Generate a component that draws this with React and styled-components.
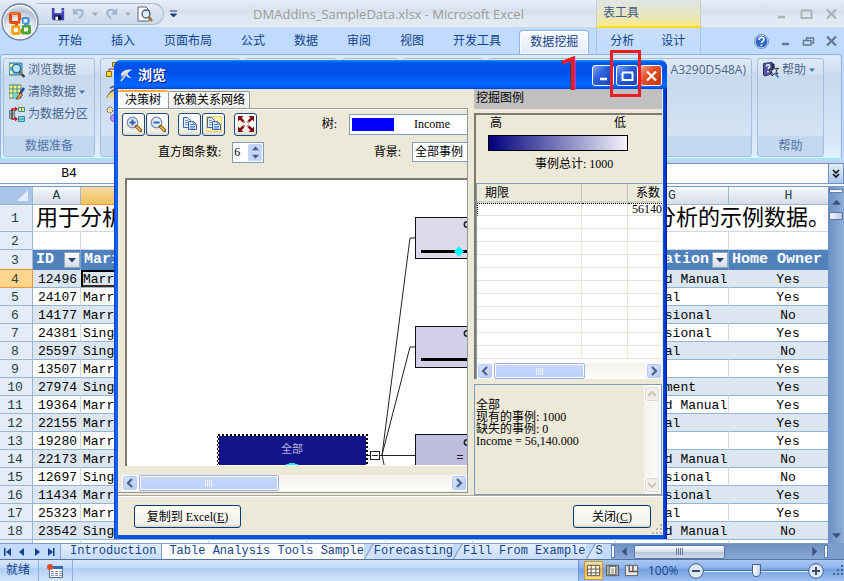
import React from 'react';
import styled, { createGlobalStyle, css } from 'styled-components';

const rows = [
  ['12496', 'Married', 'Skilled Manual', 'Yes'],
  ['24107', 'Married', 'Clerical', 'Yes'],
  ['14177', 'Married', 'Professional', 'No'],
  ['24381', 'Single', 'Professional', 'Yes'],
  ['25597', 'Single', 'Clerical', 'No'],
  ['13507', 'Married', '', 'Yes'],
  ['27974', 'Single', 'Management', 'Yes'],
  ['19364', 'Married', 'Skilled Manual', 'Yes'],
  ['22155', 'Married', 'Clerical', 'Yes'],
  ['19280', 'Married', '', 'Yes'],
  ['22173', 'Married', 'Skilled Manual', 'No'],
  ['12697', 'Single', 'Professional', 'No'],
  ['11434', 'Married', 'Professional', 'Yes'],
  ['25323', 'Married', 'Clerical', 'Yes'],
  ['23542', 'Single', 'Skilled Manual', 'No'],
];

const ribbonTabs = ['开始', '插入', '页面布局', '公式', '数据', '审阅', '视图', '开发工具', '数据挖掘'];

function Arrow({ dir = 'down', size = 7, color = '#4d6185' }) {
  const turn = { down: 0, up: 180, left: 90, right: 270 }[dir];
  return (
    <svg width={size} height={size} viewBox="0 0 8 8" aria-hidden="true">
      <path d="M0 2h8L4 6.5z" fill={color} transform={`rotate(${turn} 4 4)`} />
    </svg>
  );
}

function Chevron({ dir, color = '#4d6185' }) {
  const turn = { right: 0, down: 90, left: 180, up: 270 }[dir];
  return (
    <svg width="10" height="10" viewBox="0 0 10 10" aria-hidden="true">
      <path d="M3 1l4 4-4 4" fill="none" stroke={color} strokeWidth="2.2" transform={`rotate(${turn} 5 5)`} />
    </svg>
  );
}

function WindowGlyph({ kind, color }) {
  return (
    <svg width="13" height="12" viewBox="0 0 13 12" fill="none" stroke={color} aria-hidden="true">
      {kind === 'min' && <path d="M3 9h7" strokeWidth="2.500" />}
      {kind === 'max' && <path d="M1 2.500h11M1.500 3v7h10V3" strokeWidth="2" />}
      {kind === 'restore' && <path d="M4 3h8M4.500 3v2M11.500 3v5H10M1 5.500h8M1.500 5v5h7.500V5" strokeWidth="1.400" />}
      {kind === 'close' && <path d="M2 1.500l9 9M11 1.500l-9 9" strokeWidth="2.200" />}
    </svg>
  );
}

function OfficeLogo() {
  return (
    <svg width="40" height="42" viewBox="0 0 40 42" aria-hidden="true">
      <defs>
        <radialGradient id="orb" cx="50%" cy="75%" r="75%">
          <stop offset="0" stopColor="#ffffff" />
          <stop offset="0.5" stopColor="#e4e9f2" />
          <stop offset="0.75" stopColor="#b4bfd2" />
          <stop offset="1" stopColor="#f4f6fa" />
        </radialGradient>
      </defs>
      <circle cx="20" cy="22" r="18" fill="url(#orb)" stroke="#72839f" strokeWidth="1.300" />
      <circle cx="20" cy="22" r="16.500" fill="none" stroke="#fff" opacity="0.800" />
      <g fill="none">
        <rect x="10.500" y="13.500" width="9" height="9" rx="1.500" stroke="#e8490f" strokeWidth="3.200" />
        <path d="M11 13.500h7" stroke="#f28a1c" strokeWidth="2" />
        <rect x="22.500" y="18" width="6" height="5.500" rx="1" stroke="#3b8fd6" strokeWidth="2.200" />
        <rect x="12.500" y="26.500" width="7" height="7" rx="1" stroke="#f4a61c" strokeWidth="2.800" />
        <rect x="22.500" y="26" width="7" height="7" rx="1" stroke="#4fa532" strokeWidth="3" />
        <path d="M17 24.500h8M21 20v9" stroke="#f7f8fb" strokeWidth="1.500" />
        <path d="M15 24.500h3" stroke="#e8490f" strokeWidth="2" />
        <path d="M24 24.500h3" stroke="#3b8fd6" strokeWidth="2" />
      </g>
    </svg>
  );
}

function Icon({ name, size = 16 }) {
  return (
    <svg width={size} height={size} viewBox="0 0 16 16" fill="none" aria-hidden="true">
      {name === 'save' && (
        <>
          <path d="M1 1h14v14H2.500L1 13.500z" fill="#3f43b5" />
          <path d="M4 1h8v6H4z" fill="#dfe8fa" />
          <path d="M4 9.500h8V15H4z" fill="#15183c" />
          <path d="M5 11h3v4H5z" fill="#eef2ff" />
          <path d="M13 3h1v2h-1z" fill="#c6ccff" />
        </>
      )}
      {(name === 'undo' || name === 'redo') && (
        <g transform={name === 'redo' ? 'translate(16 0) scale(-1 1)' : undefined}>
          <path d="M4 7c2-4 8-4 8.500 0 .3 3-2 4-4 6" stroke="#9fb2d3" strokeWidth="2.200" />
          <path d="M2 2v7h7z" fill="#9fb2d3" />
        </g>
      )}
      {name === 'preview' && (
        <>
          <path d="M1 1h8l3 3v11H1z" fill="#fff" stroke="#58627a" />
          <circle cx="9" cy="8" r="4" fill="#d9ecfa" stroke="#4a5872" strokeWidth="1.300" />
          <path d="M12 11l3 4" stroke="#a86a20" strokeWidth="2.200" />
        </>
      )}
      {name === 'explore' && (
        <>
          <path d="M0 1h13v12H0z" fill="#5cbfe0" stroke="#3f7f9b" />
          <path d="M1 2h3v3H1zM1 9h3v3H1z" fill="#fff78f" />
          <circle cx="7.500" cy="6.500" r="4.200" fill="#b9e6fa" stroke="#39729b" strokeWidth="1.500" />
          <path d="M10.500 10l5 5" stroke="#333b4a" strokeWidth="2.400" />
          <path d="M11 10.500l2 2" stroke="#d88f24" strokeWidth="1.500" />
        </>
      )}
      {name === 'clean' && (
        <>
          <path d="M0 1h12v13H0z" fill="#fff37a" stroke="#3c8795" />
          <path d="M0 5h12M0 9h12M4 1v13M8 1v13" stroke="#3c8795" />
          <path d="M4 9h4v5H4z" fill="#6fd0e0" />
          <path d="M15 4l-4 6" stroke="#27408b" strokeWidth="2.500" />
          <path d="M11.500 9l2 2-4 4H7z" fill="#e8a046" stroke="#55361a" strokeWidth="0.800" />
        </>
      )}
      {name === 'partition' && (
        <>
          <path d="M0.500 4.500h5v8h-5z" fill="#7cdce8" stroke="#3c8795" />
          <path d="M9.500 1.500h6v4h-6z" fill="#fff37a" stroke="#3c8795" />
          <path d="M9.500 10.500h6v5h-6z" fill="#7cdce8" stroke="#3c8795" />
          <path d="M12.500 1.500v4M9.500 13h6M0.500 8h5" stroke="#3c8795" />
          <path d="M3 9V3h4M3 8v5h4" stroke="#c01818" strokeWidth="1.600" />
          <path d="M6 0.500L9 3 6 5.500zM6 10.500L9 13l-3 2.500z" fill="#c01818" />
        </>
      )}
      {name === 'tree' && (
        <>
          <path d="M3 12V7h6V3" stroke="#a02020" />
          <path d="M6.500 0.500h5v4h-5zM0.500 9.500h5v5h-5z" fill="#ffd83a" stroke="#8d6b00" />
        </>
      )}
      {name === 'curve' && (
        <>
          <path d="M4 4l7-3M1 14c3-6 6-9 10-9" stroke="#47566f" strokeWidth="1.500" />
          <path d="M1 14c2-5 5-7 10-7v7z" fill="#f8d67c" />
        </>
      )}
      {name === 'cluster' && (
        <>
          <circle cx="4" cy="4" r="3" fill="#e9e0a8" stroke="#55556b" strokeDasharray="2 1" />
          <circle cx="8" cy="12" r="3.500" fill="#b99aef" stroke="#7956bd" />
        </>
      )}
      {name === 'helpbook' && (
        <>
          <path d="M0.500 1.500L9 0.500v11L2 14l-1.500-1z" fill="#55579f" stroke="#2c2c5c" />
          <path d="M9 1l2.500 1v7L9 12z" fill="#262650" />
          <path d="M3.500 4.500c0-2.500 3.500-2.500 3 0L5 7M5 9v1.500" stroke="#fff" strokeWidth="1.400" />
          <path d="M10.500 4l1.500 3 3.500-1-2.500 3 2 3-3-1-3 3v-4L6 8h4z" fill="#d9e3ee" stroke="#252a36" />
          <path d="M11.500 11l4 4.500" stroke="#3f79c8" strokeWidth="1.800" />
        </>
      )}
      {name === 'pick' && (
        <>
          <path d="M2 6c3-4 7-5 12-4-2 1-4 2-5 4 1 2 3 4 5 5-3 0-6-1-7-4-2 1-3 1-4 3z" fill="#dfe4ea" />
          <path d="M9 5l-7 9" stroke="#c3cad2" strokeWidth="2" />
        </>
      )}
      {(name === 'zoomin' || name === 'zoomout') && (
        <>
          <circle cx="6.500" cy="6.500" r="5.300" fill="#dfeaf8" stroke="#7d90ab" strokeWidth="1.200" />
          <path d="M10.500 10.500l4 4" stroke="#7d5c1c" strokeWidth="3.500" strokeLinecap="round" />
          <path d="M10.500 10.500l4 4" stroke="#f2c54b" strokeWidth="1.700" />
          <path d={name === 'zoomin' ? 'M3.500 6.500h6M6.500 3.500v6' : 'M3.500 6.500h6'} stroke="#3a61a5" strokeWidth="2" />
        </>
      )}
      {(name === 'copy' || name === 'copyall') && (
        <>
          {name === 'copyall' && <rect x="0.500" y="0.500" width="15" height="15" fill="#fff2b0" stroke="#edc33c" strokeDasharray="2 1" />}
          <path d="M1.500 1.500h4l3 3v7h-7z" fill="#e7f1ff" stroke="#3864b1" />
          <path d="M3 4.500h3M3 6.500h3M3 8.500h3" stroke="#6c94d5" />
          <path d="M6.500 5.500h5l3 3v5h-8z" fill="#d3e4ff" stroke="#3864b1" />
          <path d="M8 8.500h3M8 10.500h5M8 12h5M11.500 6v2.500h3" stroke="#5c84c9" />
        </>
      )}
      {name === 'fit' && (
        <>
          <path d="M2 2l4.500 4.500M14 2L9.500 6.500M2 14l4.500-4.500M14 14L9.500 9.500" stroke="#850d12" strokeWidth="2.500" strokeDasharray="5 0.700" />
          <path d="M0 0h5.500L0 5.500zM16 0v5.500L10.500 0zM0 16v-5.500L5.500 16zM16 16h-5.500l5.500-5.500z" fill="#850d12" />
        </>
      )}
      {name === 'macro' && (
        <>
          <path d="M2.500 3.500h13v11h-13z" fill="#fff" stroke="#536d99" />
          <path d="M2 3h14v3H2z" fill="#3869b4" />
          <path d="M4 8.500h3M8 8.500h3M12 8.500h3M4 10.500h3M8 10.500h3M12 10.500h3M4 12.500h3M8 12.500h3M12 12.500h3" stroke="#8298bd" />
          <circle cx="3" cy="4" r="3" fill="#d94f2e" />
        </>
      )}
      {name === 'normal' && (
        <>
          <path d="M1.500 2.500h13v11h-13z" fill="#fffbe8" stroke="#58554c" />
          <path d="M1.500 6.500h13M1.500 10.500h13M5.500 2.500v11M10.500 2.500v11" stroke="#58554c" />
        </>
      )}
      {name === 'page' && (
        <>
          <path d="M1.500 2.500h13v11h-13z" fill="#b2b2b8" stroke="#58554c" />
          <path d="M4.500 3.500h7v9h-7z" fill="#fff" stroke="#58554c" />
          <path d="M6 6.500h4M6 8.500h4M6 10.500h4" stroke="#777" />
        </>
      )}
      {name === 'breaks' && (
        <>
          <path d="M1.500 2.500h13v11h-13z" fill="#e8e8ef" stroke="#58554c" />
          <path d="M5.500 3v6h4V3M9.500 9H15" stroke="#58554c" strokeWidth="1.500" />
        </>
      )}
    </svg>
  );
}

function Grip({ color = '#b8b4a2' }) {
  return (
    <svg width="11" height="11" viewBox="0 0 11 11" fill={color} aria-hidden="true">
      <path d="M8 0h2v2H8zM4 4h2v2H4zM8 4h2v2H8zM0 8h2v2H0zM4 8h2v2H4zM8 8h2v2H8z" />
    </svg>
  );
}

function XpScroll({ thumb }) {
  return (
    <ScrollTrack>
      <ScrollButton aria-label="向左"><Chevron dir="left" /></ScrollButton>
      <ScrollThumb $width={thumb}>
        <svg width="8" height="7" aria-hidden="true">
          <path d="M0.500 0v7M2.500 0v7M4.500 0v7M6.500 0v7" stroke="#8cabf0" />
        </svg>
      </ScrollThumb>
      <ScrollSpace />
      <ScrollButton aria-label="向右"><Chevron dir="right" /></ScrollButton>
    </ScrollTrack>
  );
}

function TreeDiagram() {
  return (
    <Canvas>
      <svg width="600" height="285" viewBox="127 180 600 285" role="img" aria-label="决策树">
        <defs>
          <pattern id="hatch" width="4" height="4" patternUnits="userSpaceOnUse">
            <rect width="4" height="4" fill="#fff" />
            <path d="M0 0h2v2H0zM2 2h2v2H2z" fill="#000" />
          </pattern>
        </defs>
        <g fill="none" stroke="#222">
          <path d="M415 238h-5l-28 217M415 347h-5l-28 108M368 455.500h47M382 455l3 14" />
        </g>
        <g stroke="#111">
          <rect x="415.500" y="217.500" width="150" height="41" fill="#dcdaea" />
          <rect x="415.500" y="326.500" width="150" height="41" fill="#d2d0e8" />
          <rect x="415.500" y="434.500" width="150" height="41" fill="#bebddf" />
        </g>
        <path d="M421 251.500h100M421 359.500h100" stroke="#000" strokeWidth="3" />
        <path d="M459 246.500l5 5-5 5-5-5z" fill="#0ff" />
        <g fill="none" stroke="#222" strokeWidth="1.500">
          <circle cx="467" cy="224.500" r="2.700" />
          <circle cx="467" cy="333.500" r="2.700" />
          <circle cx="467" cy="442.500" r="2.700" />
          <path d="M457 455.500h6M457 458.500h6" strokeWidth="1" />
        </g>
        <rect x="217" y="434" width="151" height="45" fill="url(#hatch)" />
        <rect x="219" y="436" width="147" height="45" fill="#14148a" />
        <NodeLabel x="292" y="453">全部</NodeLabel>
        <path d="M286 464h3v-1h6v1h3v2h-12z" fill="#0ff" />
        <rect x="370.500" y="451.500" width="9" height="8" fill="#fff" stroke="#222" />
        <path d="M372 455.500h6" stroke="#222" />
      </svg>
    </Canvas>
  );
}

function BrowseDialog() {
  return (
    <Dialog role="dialog" aria-labelledby="browse-title">
      <DialogTitle>
        <Icon name="pick" size={15} />
        <h2 id="browse-title">浏览</h2>
        <XpButton aria-label="最小化"><WindowGlyph kind="min" color="#fff" /></XpButton>
        <XpButton aria-label="最大化"><WindowGlyph kind="max" color="#fff" /></XpButton>
        <XpButton $close aria-label="关闭窗口"><WindowGlyph kind="close" color="#fff" /></XpButton>
      </DialogTitle>
      <DialogBody>
        <Panes>
          <LeftPane>
            <TabStrip role="tablist">
              <PaneTab role="tab" aria-selected="true" $active>决策树</PaneTab>
              <PaneTab role="tab" aria-selected="false">依赖关系网络</PaneTab>
            </TabStrip>
            <TabPanel role="tabpanel">
              <ToolRow>
                <ToolButton aria-label="放大"><Icon name="zoomin" /></ToolButton>
                <ToolButton aria-label="缩小"><Icon name="zoomout" /></ToolButton>
                <ToolGap />
                <ToolButton aria-label="复制视图"><Icon name="copy" /></ToolButton>
                <ToolButton aria-label="复制全部"><Icon name="copyall" /></ToolButton>
                <ToolGap />
                <ToolButton aria-label="适合大小"><Icon name="fit" /></ToolButton>
                <FieldLabel htmlFor="tree">树:</FieldLabel>
                <TreeCombo>
                  <Swatch />
                  <Combo id="tree" defaultValue="Income"><option>Income</option></Combo>
                </TreeCombo>
              </ToolRow>
              <OptionRow>
                <FieldLabel htmlFor="bars">直方图条数:</FieldLabel>
                <Spinner>
                  <input id="bars" defaultValue="6" />
                  <SpinArrows>
                    <Arrow dir="up" />
                    <Arrow />
                  </SpinArrows>
                </Spinner>
                <FieldLabel htmlFor="background">背景:</FieldLabel>
                <CaseCombo>
                  <Combo id="background" defaultValue="全部事例"><option>全部事例</option></Combo>
                </CaseCombo>
              </OptionRow>
              <TreeDiagram />
              <XpScroll thumb={140} />
            </TabPanel>
          </LeftPane>
          <RightPane>
            <LegendTitle>挖掘图例</LegendTitle>
            <Legend>
              <LegendScale>
                <div><span>高</span><span>低</span></div>
                <GradientBar />
                <p>事例总计: 1000</p>
              </LegendScale>
              <TermBox>
                <TermTable>
                  <colgroup>
                    <col width="105" />
                    <col width="46" />
                    <col />
                  </colgroup>
                  <thead>
                    <tr><th>期限</th><th /><th>系数</th></tr>
                  </thead>
                  <tbody>
                    <tr className="focus"><td /><td /><td>56140</td></tr>
                    {Array.from({ length: 11 }, (_, i) => (
                      <tr key={i}><td /><td /><td /></tr>
                    ))}
                  </tbody>
                </TermTable>
                <XpScroll thumb={91} />
              </TermBox>
            </Legend>
            <DetailBox>
              <textarea
                aria-label="节点详细信息"
                readOnly
                value={'全部\n现有的事例: 1000\n缺失的事例: 0\nIncome = 56,140.000'}
              />
              <DetailScroll>
                <ScrollButton $disabled aria-label="向上"><Chevron dir="up" color="#c9c7ba" /></ScrollButton>
                <ScrollButton $disabled aria-label="向下"><Chevron dir="down" color="#c9c7ba" /></ScrollButton>
              </DetailScroll>
            </DetailBox>
          </RightPane>
        </Panes>
        <DialogFooter>
          <PushButton $wide>复制到 Excel(<u>E</u>)</PushButton>
          <PushButton>关闭(<u>C</u>)</PushButton>
          <Grip />
        </DialogFooter>
      </DialogBody>
    </Dialog>
  );
}

function Sheet() {
  return (
    <SheetArea>
      <GridClip>
        <Grid>
          <colgroup>
            {[33, 48, 128, 98, 79, 87, 143, 113].map((w, i) => <col key={i} width={w} />)}
            <col />
          </colgroup>
          <thead>
            <tr>
              <ColHead $corner>
                <svg width="12" height="12" aria-hidden="true"><path d="M12 0v11H1z" fill="#e6edf8" /></svg>
              </ColHead>
              {['A', 'B', 'C', 'D', 'E', 'F', 'G', 'H'].map((c) => (
                <ColHead key={c} $selected={c === 'B'}>{c}</ColHead>
              ))}
            </tr>
          </thead>
          <tbody>
            <tr>
              <RowHead $height={27}>1</RowHead>
              <Headline colSpan={6}>用于分析</Headline>
              <Headline colSpan={2} $right>分析的示例数据。</Headline>
            </tr>
            <tr>
              <RowHead>2</RowHead>
              {Array.from({ length: 8 }, (_, i) => <Cell key={i} />)}
            </tr>
            <tr>
              <RowHead $height={20}>3</RowHead>
              <FieldHead><div>ID<Filter /></div></FieldHead>
              <FieldHead><div>Marital</div></FieldHead>
              <FieldHead colSpan={4} />
              <FieldHead><div>Occupation<Filter /></div></FieldHead>
              <FieldHead><div>Home Owner</div></FieldHead>
            </tr>
            {rows.map(([id, status, job, owner], i) => (
              <tr key={id}>
                <RowHead $selected={i === 0}>{i + 4}</RowHead>
                <Cell $data $band={i % 2 === 0} $align="right">{id}</Cell>
                <Cell $data $band={i % 2 === 0} $current={i === 0}>{status}</Cell>
                <Cell $data $band={i % 2 === 0} />
                <Cell $data $band={i % 2 === 0} />
                <Cell $data $band={i % 2 === 0} />
                <Cell $data $band={i % 2 === 0} />
                <Cell $data $band={i % 2 === 0}>{job}</Cell>
                <Cell $data $band={i % 2 === 0} $align="center">{owner}</Cell>
              </tr>
            ))}
            <tr>
              <RowHead />
              {Array.from({ length: 8 }, (_, i) => <Cell key={i} />)}
            </tr>
          </tbody>
        </Grid>
      </GridClip>
      <VerticalScroll>
        <SplitBar />
        <Arrow dir="up" size={9} color="#3b5280" />
        <VerticalThumb />
        <Arrow size={9} color="#3b5280" />
      </VerticalScroll>
    </SheetArea>
  );
}

function Filter() {
  return <FilterButton aria-label="筛选"><Arrow size={8} color="#30466f" /></FilterButton>;
}

function Slant() {
  return (
    <svg width="10" height="16" viewBox="0 0 10 16" aria-hidden="true">
      <path d="M0 16L9 0h1v16z" fill="#d4e5fb" />
      <path d="M0 16L9 0h1" fill="none" stroke="#6f8fbd" />
    </svg>
  );
}

export default function App() {
  return (
    <Page>
      <GlobalStyle />
      <TitleBar>
        <QuickAccess>
          <button aria-label="保存"><Icon name="save" size={14} /></button>
          <button aria-label="撤消"><Icon name="undo" size={15} /></button>
          <Arrow size={6} color="#a4a9b4" />
          <button aria-label="恢复"><Icon name="redo" size={15} /></button>
          <Arrow size={6} color="#a4a9b4" />
          <button aria-label="打印预览"><Icon name="preview" size={16} /></button>
        </QuickAccess>
        <MoreButton aria-label="自定义快速访问工具栏">
          <svg width="7" height="8" aria-hidden="true"><path d="M0 1h7M0.500 4h6l-3 3z" stroke="#27427c" fill="#27427c" /></svg>
        </MoreButton>
        <DocTitle>DMAddins_SampleData.xlsx - Microsoft Excel</DocTitle>
        <ContextTitle>表工具</ContextTitle>
        <WindowButtons>
          <button aria-label="最小化"><WindowGlyph kind="min" color="#adb2ba" /></button>
          <button aria-label="最大化"><WindowGlyph kind="max" color="#adb2ba" /></button>
          <button aria-label="关闭"><WindowGlyph kind="close" color="#adb2ba" /></button>
        </WindowButtons>
      </TitleBar>
      <OfficeButton aria-label="Office 按钮"><OfficeLogo /></OfficeButton>

      <RibbonTabs>
        {ribbonTabs.map((t) => (
          <RibbonTab key={t} $active={t === '数据挖掘'}>{t}</RibbonTab>
        ))}
        <ContextTabs>
          <RibbonTab>分析</RibbonTab>
          <RibbonTab>设计</RibbonTab>
        </ContextTabs>
        <WindowButtons $doc>
          <button aria-label="帮助">
            <svg width="15" height="15" viewBox="0 0 15 15" aria-hidden="true">
              <circle cx="7.500" cy="7.500" r="6.500" fill="#2f67c8" stroke="#fff" />
              <circle cx="7.500" cy="7.500" r="7" fill="none" stroke="#6688bb" />
              <path d="M5 6c0-3.500 5-3.500 5-0.500 0 2-2.400 1.500-2.400 3.500M7.500 10.500v1.500" fill="none" stroke="#fff" strokeWidth="1.700" />
            </svg>
          </button>
          <button aria-label="最小化工作簿"><WindowGlyph kind="min" color="#68768b" /></button>
          <button aria-label="还原工作簿"><WindowGlyph kind="restore" color="#68768b" /></button>
          <button aria-label="关闭工作簿"><WindowGlyph kind="close" color="#68768b" /></button>
        </WindowButtons>
      </RibbonTabs>

      <Ribbon>
        <Group $width={92}>
          <GroupItems>
            <RibbonButton><Icon name="explore" />浏览数据</RibbonButton>
            <RibbonButton><Icon name="clean" />清除数据<Arrow size={6} color="#52729f" /></RibbonButton>
            <RibbonButton><Icon name="partition" />为数据分区</RibbonButton>
          </GroupItems>
          <GroupTitle>数据准备</GroupTitle>
        </Group>
        <Group $width={140}>
          <GroupItems>
            <RibbonButton aria-label="分类"><Icon name="tree" /></RibbonButton>
            <RibbonButton aria-label="估计"><Icon name="curve" /></RibbonButton>
            <RibbonButton aria-label="聚类"><Icon name="cluster" /></RibbonButton>
          </GroupItems>
          <GroupTitle />
        </Group>
        <Group $width={92}><GroupItems /><GroupTitle /></Group>
        <Group $width={56}><GroupItems /><GroupTitle /></Group>
        <Group $width={80}><GroupItems /><GroupTitle /></Group>
        <Group $width={264}>
          <GroupItems $right>
            <RibbonButton>A3290D548A)</RibbonButton>
          </GroupItems>
          <GroupTitle />
        </Group>
        <Group $width={67}>
          <GroupItems>
            <RibbonButton><Icon name="helpbook" />帮助<Arrow size={6} color="#52729f" /></RibbonButton>
          </GroupItems>
          <GroupTitle>帮助</GroupTitle>
        </Group>
      </Ribbon>

      <FormulaBar>
        <NameBox aria-label="名称框" defaultValue="B4" />
        <FormulaInput aria-label="编辑栏" />
        <ExpandButton aria-label="展开编辑栏">
          <svg width="8" height="10" aria-hidden="true"><path d="M1 1l3 3 3-3M1 5l3 3 3-3" fill="none" stroke="#111" strokeWidth="1.600" /></svg>
        </ExpandButton>
      </FormulaBar>

      <Sheet />

      <SheetBar>
        <SheetNav>
          {['first', 'prev', 'next', 'last'].map((n) => (
            <button key={n} aria-label={n}>
              <svg width="8" height="8" viewBox="0 0 8 8" fill="#15428b" aria-hidden="true">
                {n === 'first' && <path d="M0 0h1.500v8H0zM7 0v8L2 4z" />}
                {n === 'prev' && <path d="M6 0v8L1 4z" />}
                {n === 'next' && <path d="M2 0v8l5-4z" />}
                {n === 'last' && <path d="M6 0h1.500v8H6zM1 0v8l5-4z" />}
              </svg>
            </button>
          ))}
        </SheetNav>
        <SheetTabs>
          <SheetTab>Introduction</SheetTab>
          <SheetTab $active>Table Analysis Tools Sample</SheetTab>
          <Slant />
          <SheetTab>Forecasting</SheetTab>
          <Slant />
          <SheetTab>Fill From Example</SheetTab>
          <Slant />
          <SheetTab>S</SheetTab>
        </SheetTabs>
        <BottomScroll>
          <SplitHandle />
          <Arrow dir="left" size={9} color="#3b5280" />
          <BottomThumb>
            <svg width="8" height="7" aria-hidden="true"><path d="M0.500 0v7M2.500 0v7M4.500 0v7M6.500 0v7" stroke="#6c7d99" /></svg>
          </BottomThumb>
          <BottomSpace />
          <Arrow dir="right" size={9} color="#3b5280" />
          <SplitHandle />
        </BottomScroll>
        <Corner />
      </SheetBar>

      <StatusBar>
        <StatusText>就绪</StatusText>
        <StatusIcon aria-label="录制宏"><Icon name="macro" /></StatusIcon>
        <StatusRight>
          <ViewButton $active aria-label="普通"><Icon name="normal" size={15} /></ViewButton>
          <ViewButton aria-label="页面布局视图"><Icon name="page" size={15} /></ViewButton>
          <ViewButton aria-label="分页预览"><Icon name="breaks" size={15} /></ViewButton>
          <ZoomLabel htmlFor="zoom">100%</ZoomLabel>
          <RoundButton aria-label="缩小显示">
            <svg width="16" height="16" aria-hidden="true"><circle cx="8" cy="8" r="7.300" fill="#dfe8f6" stroke="#46628f" /><path d="M4 8h8" stroke="#3c4a63" strokeWidth="2" /></svg>
          </RoundButton>
          <ZoomSlider id="zoom" type="range" defaultValue="50" />
          <RoundButton aria-label="放大显示">
            <svg width="16" height="16" aria-hidden="true"><circle cx="8" cy="8" r="7.300" fill="#dfe8f6" stroke="#46628f" /><path d="M4 8h8M8 4v8" stroke="#3c4a63" strokeWidth="2" /></svg>
          </RoundButton>
          <Grip color="#4a6796" />
        </StatusRight>
      </StatusBar>

      <BrowseDialog />
      <StepBox />
      <StepNumber>1</StepNumber>
    </Page>
  );
}

const GlobalStyle = createGlobalStyle`
  * {
    box-sizing: border-box;
  }

  body {
    margin: 0;
    font: 12px/16px 'Open Sans', 'Noto Sans CJK SC', sans-serif;
    color: #000;
  }

  button, input, select, textarea {
    margin: 0;
    padding: 0;
    border: 0;
    background: none;
    font: inherit;
    color: inherit;
    outline: none;
  }

  svg {
    display: block;
    flex: none;
  }
`;

const simsun = css`
  font-family: 'Liberation Serif', 'Noto Sans CJK SC', serif;
`;

const mono = css`
  font-family: 'Liberation Mono', 'Noto Sans CJK SC', monospace;
`;

const Page = styled.div`
  position: relative;
  display: flex;
  flex-direction: column;
  height: 100vh;
  overflow: hidden;
  background: #bfdbff;
`;

const TitleBar = styled.header`
  display: flex;
  align-items: center;
  flex: none;
  height: 28px;
  padding-left: 37px;
  background: linear-gradient(#e6eef8, #d6dfeb 45%, #dfe8f2 60%, #e2eaf3);
  border-bottom: 1px solid #c9d8ea;
`;

const OfficeButton = styled.button`
  position: absolute;
  left: 0;
  top: 0;
`;

const QuickAccess = styled.div`
  display: flex;
  align-items: center;
  gap: 6px;
  width: 127px;
  height: 22px;
  padding-left: 14px;
  border: 1px solid #a9bcd6;
  border-left: 0;
  border-radius: 0 11px 11px 0;
  background: linear-gradient(#e3ebf6, #cbd8e9);
`;

const MoreButton = styled.button`
  margin-left: 6px;
`;

const DocTitle = styled.h1`
  flex: 1;
  margin: 0;
  text-align: center;
  font-size: 13px;
  font-weight: 400;
  color: #9b9b9b;
  white-space: nowrap;
  padding-left: 4px;
`;

const ContextTitle = styled.div`
  width: 105px;
  height: 28px;
  padding: 5px 6px;
  color: #3d5a87;
  border-left: 1px solid #c6d0d0;
  border-right: 1px solid #c6d0d0;
  border-bottom: 2px solid #fbd929;
  background: linear-gradient(#dfe6e6, #e8e6c0 60%, #fbea86);
`;

const WindowButtons = styled.div`
  display: flex;
  align-items: center;
  justify-content: flex-end;
  gap: ${(p) => (p.$doc ? 10 : 12)}px;
  width: ${(p) => (p.$doc ? 'auto' : '143px')};
  margin-left: auto;
  padding-right: 6px;
`;

const RibbonTabs = styled.nav`
  display: flex;
  flex: none;
  height: 26px;
  padding-left: 44px;
  background: #bfdbff;
`;

const RibbonTab = styled.button`
  padding: 0 14px;
  margin-right: 1px;
  color: #15428b;
  white-space: nowrap;
  ${(p) =>
    p.$active &&
    css`
      padding: 0 10px 2px;
      margin: 2px 4px 0 3px;
      border: 1px solid #8db2e3;
      border-bottom: 0;
      border-radius: 4px 4px 0 0;
      background: linear-gradient(#fdfeff, #dfeafa);
      box-shadow: inset 0 0 0 1px #fff;
    `}
`;

const ContextTabs = styled.div`
  display: flex;
  width: 105px;
  margin-left: 3px;
  border-left: 1px solid #a9c4e4;
  border-right: 1px solid #a9c4e4;
  background: linear-gradient(#c9dff7, #bfdbff);

  > button {
    padding: 0 13px;
  }
`;

const Ribbon = styled.section`
  display: flex;
  flex: none;
  gap: 5px;
  height: 106px;
  margin: 0 2px 0 0;
  padding: 3px 2px 1px;
  border: 1px solid #8db2e3;
  border-bottom: 2px solid #a6e4f4;
  border-radius: 4px;
  background: linear-gradient(#e0eaf8, #d0e0f3 16%, #c6d9ee 17%, #d8e8f8 85%, #e0f2fb);
`;

const Group = styled.div`
  display: flex;
  flex-direction: column;
  flex: none;
  width: ${(p) => p.$width}px;
  border: 1px solid #a7bfdd;
  border-radius: 3px;
  overflow: hidden;
  background: linear-gradient(#dfe9f5, #d2e0f1 16%, #c7d9ed 17%, #d8e7f6);
`;

const GroupItems = styled.div`
  flex: 1;
  display: flex;
  flex-direction: column;
  gap: 6px;
  align-items: ${(p) => (p.$right ? 'flex-end' : 'flex-start')};
  padding: 3px 5px 0;
`;

const RibbonButton = styled.button`
  display: flex;
  align-items: center;
  gap: 3px;
  height: 16px;
  color: #4a648c;
  white-space: nowrap;
`;

const GroupTitle = styled.div`
  height: 20px;
  line-height: 20px;
  text-align: center;
  color: #5373a3;
  background: #c1d8f0;
`;

const FormulaBar = styled.div`
  display: flex;
  flex: none;
  height: 27px;
  padding: 3px 0 0;
  border-bottom: 1px solid #7a9ac4;
  background: linear-gradient(#bcd5f5 0 3px, #6f93c0 3px 4px, #fff 4px 23px, #7f9dc4 23px 24px, #f4f8fd 24px);
`;

const NameBox = styled.input`
  width: 138px;
  height: 20px;
  text-align: center;
  ${mono}
  font-size: 13px;
`;

const FormulaInput = styled.input`
  flex: 1;
  height: 20px;
`;

const ExpandButton = styled.button`
  display: grid;
  place-items: center;
  width: 16px;
  height: 21px;
  border: 1px solid #6f93c0;
  background: linear-gradient(#e3eefb, #aac6ea);
`;

const SheetArea = styled.div`
  display: flex;
  flex: 1;
  min-height: 0;
`;

const GridClip = styled.div`
  flex: 1;
  overflow: hidden;
  background: #fff;
`;

const Grid = styled.table`
  width: max(100%, 849px);
  table-layout: fixed;
  border-collapse: separate;
  border-spacing: 0;
  ${mono}
  font-size: 13px;
  line-height: 16px;
`;

const ColHead = styled.th`
  height: 18px;
  padding: 0;
  font-weight: 400;
  line-height: 16px;
  color: #27413e;
  border-right: 1px solid #9eb6ce;
  border-bottom: 1px solid #9eb6ce;
  background: linear-gradient(#f6f9fc, #d5dde9);
  ${(p) =>
    p.$corner &&
    css`
      background: #a9c4e9;

      > svg {
        margin: 1px 4px 0 auto;
      }
    `}
  ${(p) =>
    p.$selected &&
    css`
      border-color: #f29536;
      background: linear-gradient(#f9d99f, #f1c15f);
    `}
`;

const RowHead = styled.th`
  height: ${(p) => p.$height || 18}px;
  padding: 2px 2px 0 0;
  font-weight: 400;
  line-height: 14px;
  color: #27413e;
  border-right: 1px solid #9eb6ce;
  border-bottom: 1px solid #9eb6ce;
  background: ${(p) => (p.$selected ? '#ffd58d' : '#e4ecf7')};
  ${(p) => p.$selected && 'border-color: #f29536; box-shadow: 0 -1px #f29536;'}
`;

const Headline = styled.td`
  padding: 4px 0 0 3px;
  font-size: 22px;
  line-height: 22px;
  white-space: nowrap;
  overflow: hidden;
  border-bottom: 1px solid #d0d7e5;
  ${(p) => p.$right && 'padding-left: 38px;'}
`;

const Cell = styled.td`
  height: 18px;
  padding: 3px 3px 0 2px;
  line-height: 14px;
  overflow: hidden;
  white-space: nowrap;
  text-align: ${(p) => p.$align || 'left'};
  border-right: 1px solid ${(p) => (p.$band ? '#dce6f1' : '#d0d7e5')};
  border-bottom: 1px solid ${(p) => (p.$data ? '#95b3d7' : '#d0d7e5')};
  background: ${(p) => (p.$band ? '#dce6f1' : '#fff')};
  ${(p) => p.$current && 'box-shadow: inset 2px 2px #000, inset 0 -2px #3b2a17;'}
`;

const FieldHead = styled.td`
  padding: 0;
  overflow: hidden;
  color: #fff;
  font-size: 15px;
  font-weight: 700;
  white-space: nowrap;
  border-right: 1px solid #7fa3d0;
  background: #4f81bd;

  > div {
    display: flex;
    align-items: center;
    justify-content: space-between;
    padding-left: 3px;
    height: 18px;
  }
`;

const FilterButton = styled.button`
  display: grid;
  place-items: center;
  width: 16px;
  height: 16px;
  border: 1px solid #98a7bd;
  background: linear-gradient(#fdfdfe, #d5dbe6);
`;

const VerticalScroll = styled.div`
  display: flex;
  flex-direction: column;
  align-items: center;
  gap: 5px;
  width: 16px;
  padding: 2px 0 3px;
  background: linear-gradient(90deg, #6a8fc3, #8fafd9);

  > svg:last-child {
    margin-top: auto;
  }
`;

const SplitBar = styled.div`
  width: 14px;
  height: 4px;
  border: 1px solid #5f7fae;
  background: #f3f8ff;
`;

const VerticalThumb = styled.div`
  width: 14px;
  height: 8px;
  border: 1px solid #5c77a3;
  border-radius: 1px;
  background: linear-gradient(90deg, #f8fafd, #bccadf);
`;

const SheetBar = styled.div`
  display: flex;
  flex: none;
  height: 17px;
  border-top: 1px solid #7d9cc8;
  border-bottom: 1px solid #54749f;
  background: #c3dafa;
`;

const SheetNav = styled.div`
  display: flex;
  align-items: center;
  justify-content: space-between;
  width: 61px;
  padding: 0 5px 0 4px;
  border-right: 1px solid #8aa6cf;
`;

const SheetTabs = styled.div`
  display: flex;
  flex: 1;
  min-width: 0;
  overflow: hidden;
`;

const SheetTab = styled.button`
  flex: none;
  ${mono}
  font-size: 12px;
  line-height: 15px;
  color: #15428b;
  white-space: nowrap;
  background: linear-gradient(#e4effd, #c6dcf8);

  &:first-child {
    padding: 0 5px 0 9px;
    border-right: 1px solid #7d9cc8;
  }

  ${(p) => p.$active && 'padding-left: 7px; background: #fff;'}
`;

const BottomScroll = styled.div`
  display: flex;
  align-items: center;
  gap: 5px;
  width: 217px;
  background: linear-gradient(#6d90c2, #89a9d5);
`;

const SplitHandle = styled.div`
  width: 4px;
  height: 13px;
  border: 1px solid #5f7fae;
  background: #f3f8ff;
`;

const BottomThumb = styled.div`
  display: grid;
  place-items: center;
  width: 91px;
  height: 14px;
  border: 1px solid #5c77a3;
  border-radius: 2px;
  background: linear-gradient(#fbfcfe, #dbe3ef 45%, #b9c7dc 50%, #cfdbec);
`;

const BottomSpace = styled.div`
  flex: 1;
`;

const Corner = styled.div`
  width: 16px;
  background: #7d9fd0;
`;

const StatusBar = styled.footer`
  display: flex;
  flex: none;
  height: 21px;
  background: linear-gradient(#d8e7fb, #c3dafa 35%, #afcdf5 40%, #cfe3fd 90%);
`;

const StatusText = styled.div`
  width: 39px;
  padding: 2px 0 0 6px;
  color: #15428b;
  border-right: 1px solid #8eb0de;
`;

const StatusIcon = styled.button`
  width: 34px;
  padding-left: 8px;
  border-right: 1px solid #8eb0de;
`;

const StatusRight = styled.div`
  display: flex;
  align-items: center;
  width: 266px;
  margin-left: auto;
  padding-left: 5px;
  border-left: 1px solid #6d94cf;
  background: linear-gradient(#a9c8f3, #8fb6ec 35%, #76a2e0 45%, #9dc0f0);
`;

const ViewButton = styled.button`
  display: grid;
  place-items: center;
  width: 19px;
  height: 19px;
  ${(p) => p.$active && 'border: 1px solid #c59a44; background: linear-gradient(#ffe2a0, #fbb549 50%, #ffdf88);'}
`;

const ZoomLabel = styled.label`
  width: 47px;
  padding-left: 7px;
  color: #15428b;
`;

const RoundButton = styled.button`
  flex: none;
`;

const ZoomSlider = styled.input`
  appearance: none;
  flex: 1;
  min-width: 0;
  height: 16px;
  background: linear-gradient(#0000 7px, #4f6f9f 7px 8px, #dce9fb 8px 9px, #0000 9px);

  &::-webkit-slider-thumb {
    appearance: none;
    width: 9px;
    height: 13px;
    border: 1px solid #46628f;
    border-radius: 1px 1px 5px 5px;
    background: linear-gradient(90deg, #fff, #c6d4ea);
  }

  & + button {
    margin-right: 9px;
  }
`;

/* 浏览 window */

const Dialog = styled.section`
  position: absolute;
  left: 114px;
  top: 60px;
  width: 553px;
  height: 479px;
  display: flex;
  flex-direction: column;
  padding: 0 4px 4px;
  border-radius: 7px 7px 0 0;
  background: linear-gradient(90deg, #0831d9, #166aee 2px, #0855dd 4px, #0855dd 549px, #0438d8 551px, #001ea0);
  overflow: hidden;
  ${simsun}
`;

const DialogTitle = styled.header`
  display: flex;
  align-items: center;
  gap: 2px;
  flex: none;
  height: 29px;
  margin: 0 -4px;
  padding: 2px 5px 0 5px;
  background: linear-gradient(#0997ff, #0053ee 10%, #0050e6 40%, #0066ff 85%, #0060f8 93%, #003dd7);

  > h2 {
    flex: 1;
    margin: 0 0 0 2px;
    font-size: 14px;
    line-height: 20px;
    color: #fff;
    text-shadow: 1px 1px #0f1089;
  }
`;

const XpButton = styled.button`
  display: grid;
  place-items: center;
  width: 22px;
  height: 21px;
  border: 1px solid #fff;
  border-radius: 3px;
  background: ${(p) =>
    p.$close
      ? 'linear-gradient(135deg, #f0a58c, #e2512b 40%, #c63408)'
      : 'linear-gradient(135deg, #87a9f5, #2b61dd 40%, #1941b8)'};
`;

const DialogBody = styled.div`
  display: flex;
  flex-direction: column;
  flex: 1;
  min-height: 0;
  background: #ece9d8;
`;

const Panes = styled.div`
  display: flex;
  flex: 1;
  min-height: 0;
  gap: 6px;
  padding-right: 1px;
`;

const LeftPane = styled.div`
  display: flex;
  flex-direction: column;
  flex: 1;
  min-width: 0;
  padding-bottom: 2px;
`;

const TabStrip = styled.div`
  display: flex;
  align-items: flex-end;
  height: 19px;
`;

const PaneTab = styled.button`
  height: 17px;
  padding: 0 4px;
  line-height: 15px;
  border: 1px solid #919b9c;
  border-bottom: 0;
  border-radius: 2px 2px 0 0;
  background: linear-gradient(#fff, #ecebe6);
  white-space: nowrap;
  ${(p) =>
    p.$active &&
    css`
      height: 18px;
      padding: 0 7px;
      border: 0;
      border-top: 2px solid #ffa830;
      background: #fcfcfe;
    `}
`;

const TabPanel = styled.div`
  display: flex;
  flex-direction: column;
  flex: 1;
  min-height: 0;
  overflow: hidden;
  padding: 3px 0 1px 4px;
  border: 1px solid #919b9c;
  border-left: 0;
  box-shadow: inset 0 1px #fff;
`;

const ToolRow = styled.div`
  display: flex;
  flex: none;
  align-items: center;
  gap: 1px;
  height: 24px;
`;

const ToolButton = styled.button`
  display: grid;
  place-items: center;
  flex: none;
  width: 23px;
  height: 23px;
  border: 1px solid #1c4a7f;
  border-radius: 3px;
  background: linear-gradient(#fff, #f0efe6 80%, #dcd8cc);
`;

const ToolGap = styled.div`
  flex: none;
  width: 7px;
`;

const FieldLabel = styled.label`
  flex: none;
  margin-left: auto;
  padding-right: 11px;
`;

const TreeCombo = styled.div`
  display: flex;
  align-items: center;
  flex: none;
  width: 118px;
  height: 21px;
  padding-left: 2px;
  border: 1px solid #7f9db9;
  border-right: 0;
  background: #fff;
`;

const Swatch = styled.span`
  width: 42px;
  height: 13px;
  background: #00f;
`;

const Combo = styled.select`
  appearance: none;
  flex: 1;
  height: 17px;
  line-height: 17px;

  ${Swatch} + & {
    padding-left: 20px;
  }
`;

const OptionRow = styled.div`
  display: flex;
  align-items: center;
  flex: none;
  height: 22px;
  margin: 5px 0 15px;
  padding-left: 36px;

  > label:first-child {
    margin-left: 0;
  }
`;

const Spinner = styled.div`
  display: flex;
  width: 32px;
  height: 21px;
  border: 1px solid #7f9db9;
  background: #fff;

  > input {
    width: 14px;
    padding-left: 1px;
  }
`;

const SpinArrows = styled.div`
  display: flex;
  flex-direction: column;
  justify-content: space-evenly;
  align-items: center;
  flex: 1;
  margin: 1px;
  border-radius: 2px;
  background: #c4d4fb;
`;

const CaseCombo = styled.div`
  display: flex;
  align-items: center;
  width: 55px;
  height: 20px;
  padding-left: 2px;
  border: 1px solid #7f9db9;
  border-right: 0;
  background: #fff;
`;

const Canvas = styled.div`
  flex: 1;
  min-height: 0;
  margin-left: 3px;
  overflow: hidden;
  border-top: 2px solid #7b7a6e;
  border-left: 2px solid #7b7a6e;
  background: #fff;
`;

const NodeLabel = styled.text`
  font-size: 11px;
  fill: #b5b5de;
  text-anchor: middle;
`;

const ScrollTrack = styled.div`
  display: flex;
  flex: none;
  gap: 1px;
  height: 16px;
  background: linear-gradient(#f3f1ec, #fefefb);

  ${TabPanel} > & {
    margin-top: 9px;
  }
`;

const ScrollButton = styled.button`
  display: grid;
  place-items: center;
  flex: none;
  width: 16px;
  height: 16px;
  border: 1px solid #fff;
  border-radius: 3px;
  background: linear-gradient(135deg, #dbe6ff, #b5c9f8);
  box-shadow: inset 0 0 0 1px #b4c8f6;
  ${(p) =>
    p.$disabled &&
    css`
      background: #f1f0ea;
      box-shadow: inset 0 0 0 1px #dddbd0;
    `}
`;

const ScrollThumb = styled.div`
  display: grid;
  place-items: center;
  width: ${(p) => p.$width}px;
  border: 1px solid #98b1e4;
  border-radius: 2px;
  box-shadow: inset 0 0 0 1px #fff;
  background: linear-gradient(#c9d8fc, #bdd0fb);

  path {
    stroke: #eef4fe;
  }
`;

const ScrollSpace = styled.div`
  flex: 1;
`;

const RightPane = styled.div`
  display: flex;
  flex-direction: column;
  width: 188px;
`;

const LegendTitle = styled.div`
  height: 20px;
  padding-left: 2px;
  line-height: 18px;
  background: #c0c0c0;
`;

const Legend = styled.div`
  display: flex;
  flex-direction: column;
  flex: 1;
  min-height: 0;
  margin: 4px 0 5px;
  border-top: 2px solid #7b7a6e;
  border-left: 2px solid #7b7a6e;
`;

const LegendScale = styled.div`
  flex: none;
  height: 68px;
  padding: 0 34px 0 12px;

  > div:first-child {
    display: flex;
    justify-content: space-between;
    padding: 0 2px;
    height: 20px;
    line-height: 16px;
  }

  > p {
    margin: 5px 0 0 47px;
  }
`;

const GradientBar = styled.div`
  height: 16px;
  border: 1px solid #000;
  background: linear-gradient(90deg, #00007c, #f4f4fc);
`;

const TermBox = styled.div`
  display: flex;
  flex-direction: column;
  justify-content: space-between;
  flex: 1;
  min-height: 0;
  overflow: hidden;
  border-top: 1px solid #7f9db9;
  border-left: 1px solid #7f9db9;
  background: #fff;
`;

const TermTable = styled.table`
  width: 100%;
  table-layout: fixed;
  border-spacing: 0;
  line-height: 12px;

  th {
    height: 19px;
    padding: 0 0 0 8px;
    font-weight: 400;
    text-align: left;
    white-space: nowrap;
    border-right: 1px solid #c7c5b2;
    border-bottom: 2px solid #d6d2c2;
    background: #ebeadb;
  }

  td {
    height: 13px;
    padding: 0 0 0 4px;
    overflow: hidden;
    border-right: 1px solid #e8e5d8;
    border-bottom: 1px solid #e8e5d8;
  }

  tr > :last-child {
    border-right: 0;
  }

  .focus > td {
    line-height: 11px;
    border-top: 1px dotted #000;
  }

  .focus > td:first-child {
    border-left: 1px dotted #000;
  }
`;

const DetailBox = styled.div`
  display: flex;
  flex: none;
  height: 111px;
  border: 1px solid #7f9db9;

  > textarea {
    flex: 1;
    min-width: 0;
    padding: 14px 0 0 1px;
    line-height: 12px;
    resize: none;
    overflow: hidden;
  }
`;

const DetailScroll = styled.div`
  display: flex;
  flex-direction: column;
  justify-content: space-between;
  width: 17px;
  padding: 1px 0;
  background: linear-gradient(90deg, #f3f1ec, #fefefb);
`;

const DialogFooter = styled.footer`
  display: flex;
  flex: none;
  align-items: flex-start;
  justify-content: space-between;
  height: 40px;
  padding: 9px 0 0 16px;
  border-top: 1px solid #aca899;
  box-shadow: inset 0 1px #fff;

  > svg {
    align-self: flex-end;
  }
`;

const PushButton = styled.button`
  width: ${(p) => (p.$wide ? 107 : 78)}px;
  height: 23px;
  border: 1px solid #003c74;
  border-radius: 3px;
  background: linear-gradient(#fff, #f2f1ea 85%, #d9d4c8);

  & + & {
    margin-left: auto;
    margin-right: 1px;
  }
`;

const StepBox = styled.div`
  position: absolute;
  left: 610px;
  top: 50px;
  width: 31px;
  height: 47px;
  border: 3px solid #ed1c24;
`;

const StepNumber = styled.div`
  position: absolute;
  left: 558px;
  top: 50px;
  font: 48px/48px Roboto, sans-serif;
  color: #ed1c24;
`;
